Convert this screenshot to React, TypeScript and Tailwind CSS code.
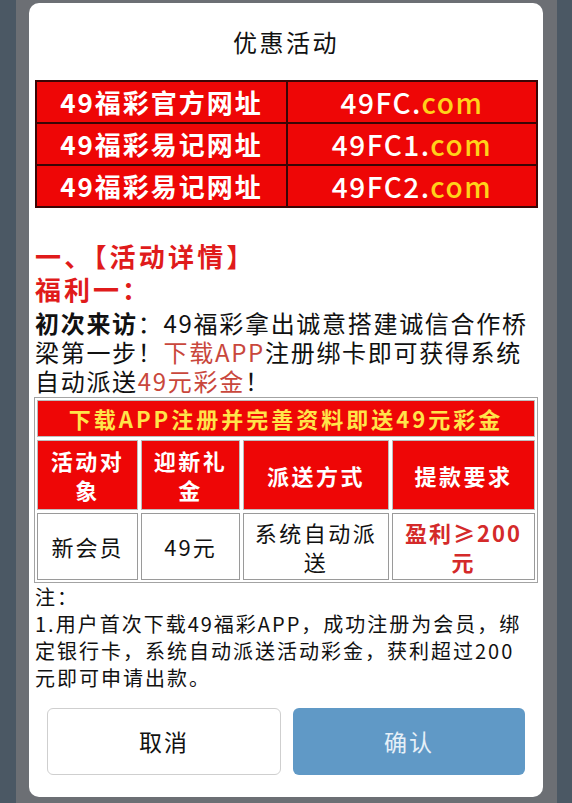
const links = [
  { name: "49福彩官方网址", host: "49FC" },
  { name: "49福彩易记网址", host: "49FC1" },
  { name: "49福彩易记网址", host: "49FC2" },
];

const heads = [["活动对", "象"], ["迎新礼", "金"], ["派送方式"], ["提款要求"]];

export default function App() {
  return (
    <div className="flex h-[803px] w-[572px] overflow-hidden bg-[#4b5864] font-['Noto_Sans_CJK_SC','Noto_Sans',sans-serif]">
      <div className="ml-[16px] flex h-full w-[541px] flex-col bg-[#6c6f74] pt-[3px]">
        <div className="ml-[13px] flex w-[514px] flex-col rounded-[10px] bg-white">
          {/* title */}
          <div className="pt-[24px] text-center text-[24px] leading-[30px] tracking-[2.5px] text-[#111]">
            优惠活动
          </div>

          <div className="mt-[23px] px-[6px]">
            <table className="w-[503px] border-collapse border-2 border-[#3a0505] bg-[#ee0606]">
              <tbody>
                {links.map((l, i) => (
                  <tr key={i} className="h-[42px]">
                    <td className="w-[251px] border-2 border-[#3a0505] text-center text-[26px] font-bold leading-[38px] tracking-[2px] text-white">
                      {l.name}
                    </td>
                    <td className="border-2 border-[#3a0505] text-center text-[28px] font-medium leading-[38px] tracking-[1.5px] text-white">
                      {l.host}.<span className="text-[#ffd21a]">com</span>
                    </td>
                  </tr>
                ))}
              </tbody>
            </table>
          </div>

          <div className="mt-[31px] px-[6px]">
            <div className="text-[26px] font-bold leading-[33px] tracking-[3.2px] text-[#e01b1b]">
              一、【活动详情】
            </div>
            <div className="text-[26px] font-bold leading-[33px] tracking-[3px] text-[#e01b1b]">
              福利一：
            </div>
            <div className="mt-[3px] whitespace-nowrap text-[24px] leading-[29px] tracking-[1.7px] text-[#111]">
              <div>
                <span className="inline-block font-bold">初次来访</span>：49福彩拿出诚意搭建诚信合作桥
              </div>
              <div>
                梁第一步！<span className="inline-block text-[#c9473c]">下载APP</span>注册绑卡即可获得系统
              </div>
              <div>
                自动派送<span className="inline-block text-[#c9473c]">49元彩金</span>！
              </div>
            </div>
          </div>

          <div className="mt-[2px] ml-[5px] w-[504px] border border-[#a3a3a3] p-[2px]">
            <div className="grid grid-cols-[101px_99px_146px_143px] gap-[3px]">
              <div className="col-span-4 flex h-[37px] items-center justify-center border border-[#bdbdbd] bg-[#ee0606] text-[22px] font-bold tracking-[3px] text-[#ffe44a]">
                下载APP注册并完善资料即送49元彩金
              </div>
              {heads.map((h, i) => (
                <div
                  key={i}
                  className="flex h-[70px] flex-col items-center justify-center border border-[#bdbdbd] bg-[#ee0606] text-[22px] font-bold leading-[29px] tracking-[2.5px] text-white"
                >
                  {h.map((t) => (
                    <span key={t}>{t}</span>
                  ))}
                </div>
              ))}
              <div className="flex h-[67px] items-center justify-center border border-[#9a9a9a] text-[22px] tracking-[2px] text-[#111]">
                新会员
              </div>
              <div className="flex h-[67px] items-center justify-center border border-[#9a9a9a] text-[22px] tracking-[2px] text-[#111]">
                49元
              </div>
              <div className="flex h-[67px] flex-col items-center justify-center border border-[#9a9a9a] text-[22px] leading-[29px] tracking-[2.5px] text-[#111]">
                <span>系统自动派</span>
                <span>送</span>
              </div>
              <div className="flex h-[67px] flex-col items-center justify-center border border-[#9a9a9a] text-[22px] font-bold leading-[29px] tracking-[2px] text-[#d42a2a]">
                <span>盈利≥200</span>
                <span>元</span>
              </div>
            </div>
          </div>

          <div className="whitespace-nowrap px-[6px] text-[20px] leading-[27px] tracking-[2px] text-[#111]">
            <div>注：</div>
            <div>1.用户首次下载49福彩APP，成功注册为会员，绑</div>
            <div>定银行卡，系统自动派送活动彩金，获利超过200</div>
            <div>元即可申请出款。</div>
          </div>

          <div className="mt-[17px] mb-[22px] flex gap-[12px] px-[18px]">
            <button className="h-[67px] flex-1 rounded-[6px] border border-[#cfcfcf] bg-white text-[23px] tracking-[2px] text-[#111]">
              取消
            </button>
            <button className="h-[67px] flex-1 rounded-[6px] bg-[#6099c6] text-[23px] tracking-[2px] text-[#e6f0f8]">
              确认
            </button>
          </div>
        </div>
      </div>
    </div>
  );
}
